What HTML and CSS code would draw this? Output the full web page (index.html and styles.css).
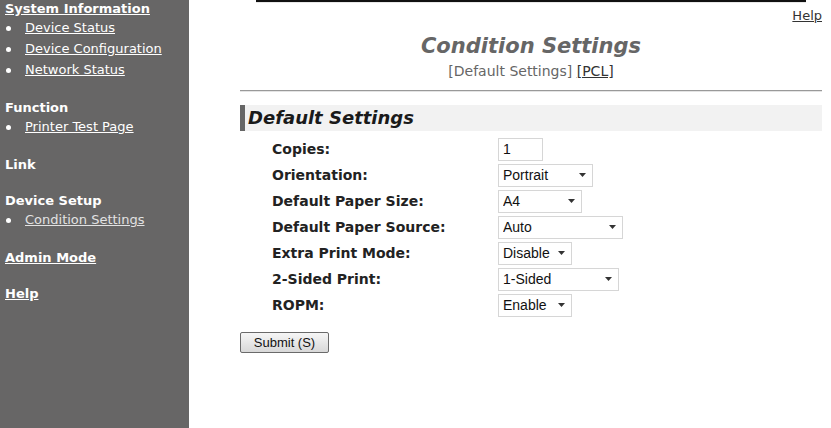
FILE: index.html
```html
<!DOCTYPE html>
<html lang="en">
<head>
    <meta charset="UTF-8">
    <title>Condition Settings</title>
    <link rel="stylesheet" href="styles.css">
</head>
<body>
    <div class="layout">
        <div class="sidebar">
            <a class="nav-head" href="#">System Information</a>
            <ul class="nav-list">
                <li><a href="#">Device Status</a></li>
                <li><a href="#">Device Configuration</a></li>
                <li><a href="#">Network Status</a></li>
            </ul>

            <div class="nav-title">Function</div>
            <ul class="nav-list">
                <li><a href="#">Printer Test Page</a></li>
            </ul>

            <div class="nav-title spaced">Link</div>

            <div class="nav-title">Device Setup</div>
            <ul class="nav-list">
                <li><a class="current" href="#">Condition Settings</a></li>
            </ul>

            <a class="nav-head" href="#">Admin Mode</a>
            <a class="nav-head" href="#">Help</a>
        </div>

        <div class="main">
            <div class="banner"></div>
            <div class="help-row"><a href="#">Help</a></div>

            <h1>Condition Settings</h1>
            <div class="tabs">[Default Settings] <a href="#">[PCL]</a></div>
            <hr>

            <h2>Default Settings</h2>
            <form class="settings">
                <label for="copies">Copies:</label>
                <div><input type="text" id="copies" value="1" class="w-copies"></div>

                <label for="orientation">Orientation:</label>
                <div>
                    <select id="orientation" class="w-95">
                        <option>Portrait</option>
                        <option>Landscape</option>
                    </select>
                </div>

                <label for="paperSize">Default Paper Size:</label>
                <div>
                    <select id="paperSize" class="w-84">
                        <option>A4</option>
                        <option>A3</option>
                        <option>B4</option>
                    </select>
                </div>

                <label for="paperSource">Default Paper Source:</label>
                <div>
                    <select id="paperSource" class="w-125">
                        <option>Auto</option>
                        <option>Bypass Tray</option>
                    </select>
                </div>

                <label for="extraPrint">Extra Print Mode:</label>
                <div>
                    <select id="extraPrint" class="w-74">
                        <option>Disable</option>
                        <option>Enable</option>
                    </select>
                </div>

                <label for="sided">2-Sided Print:</label>
                <div>
                    <select id="sided" class="w-121">
                        <option>1-Sided</option>
                        <option>2-Sided(Book)</option>
                    </select>
                </div>

                <label for="ropm">ROPM:</label>
                <div>
                    <select id="ropm" class="w-74">
                        <option>Enable</option>
                        <option>Disable</option>
                    </select>
                </div>
            </form>

            <button type="button" class="submit">Submit (S)</button>
        </div>
    </div>
</body>
</html>
```

FILE: styles.css
```css
body {
    margin: 0;
    font-family: "DejaVu Sans", Verdana, sans-serif;
    background-color: #fff;
    color: #222;
}

.layout {
    display: flex;
    min-height: 428px;
}

.sidebar {
    width: 184px;
    flex-shrink: 0;
    background-color: #676666;
    padding: 0 0 0 5px;
    font-size: 13px;
    color: #fff;
}

.sidebar a {
    color: #fff;
}

.nav-head {
    display: block;
    font-weight: bold;
    line-height: 17px;
    margin-bottom: 19px;
}

.nav-head:first-child {
    margin-bottom: 0;
}

.nav-title {
    font-weight: bold;
    line-height: 17px;
}

.nav-title.spaced {
    margin-bottom: 19px;
}

.nav-list {
    list-style: none;
    margin: 0 0 19px 0;
    padding: 0;
}

.nav-list li {
    line-height: 21px;
    padding-left: 20px;
    position: relative;
}

.nav-list li::before {
    content: "";
    position: absolute;
    left: 1px;
    top: 9px;
    width: 5px;
    height: 5px;
    border-radius: 50%;
    background-color: #fff;
}

.nav-list a.current {
    color: #e2e2e2;
}

.main {
    flex: 1;
    padding: 0 9px 0 51px;
}

.banner {
    height: 2px;
    margin: 0 16px 0 16px;
    background-color: #111;
    border-bottom: 1px solid #e8e8e8;
}

.help-row {
    text-align: right;
    font-size: 13px;
    margin-top: 4px;
    line-height: 17px;
}

.help-row a {
    color: #333;
}

h1 {
    margin: 9px 0 0 0;
    text-align: center;
    font-size: 21px;
    font-style: italic;
    font-weight: bold;
    color: #666;
    line-height: 26px;
}

.tabs {
    text-align: center;
    font-size: 14px;
    color: #666;
    margin-top: 3px;
    line-height: 18px;
}

.tabs a {
    color: #333;
}

hr {
    margin: 10px 0 0 0;
    border: none;
    border-top: 1px solid #999;
    border-bottom: 1px solid #e4e4e4;
}

h2 {
    margin: 13px 0 0 0;
    padding-left: 3px;
    border-left: 5px solid #666;
    background-color: #f2f2f2;
    font-size: 18px;
    font-style: italic;
    font-weight: bold;
    color: #1a1a1a;
    line-height: 26px;
}

.settings {
    display: grid;
    grid-template-columns: 226px auto;
    grid-auto-rows: 26px;
    margin: 5px 0 0 32px;
    align-items: center;
}

.settings label {
    font-size: 14px;
    font-weight: bold;
    color: #222;
}

input, select {
    font-family: "Liberation Sans", Arial, sans-serif;
    font-size: 14px;
    height: 23px;
    border: 1px solid #d6d6d6;
    background-color: #fff;
    color: #111;
    box-sizing: border-box;
    padding: 0 4px;
    vertical-align: middle;
    border-radius: 0;
}

select {
    appearance: none;
    -webkit-appearance: none;
    background-image: url("data:image/svg+xml,%3Csvg xmlns='http://www.w3.org/2000/svg' width='7' height='4'%3E%3Cpath d='M0 0h7L3.5 4z' fill='%23333'/%3E%3C/svg%3E");
    background-repeat: no-repeat;
    background-position: right 6px center;
}

.w-copies {
    width: 45px;
}

.w-95 { width: 95px; }
.w-84 { width: 84px; }
.w-125 { width: 125px; }
.w-74 { width: 74px; }
.w-121 { width: 121px; }

.submit {
    margin-top: 14px;
    width: 89px;
    height: 21px;
    font-family: "Liberation Sans", Arial, sans-serif;
    font-size: 13px;
    color: #111;
    background: linear-gradient(#f6f6f6, #d8d8d8);
    border: 1px solid #6a6a6a;
    border-radius: 2px;
    padding: 0;
}
```
